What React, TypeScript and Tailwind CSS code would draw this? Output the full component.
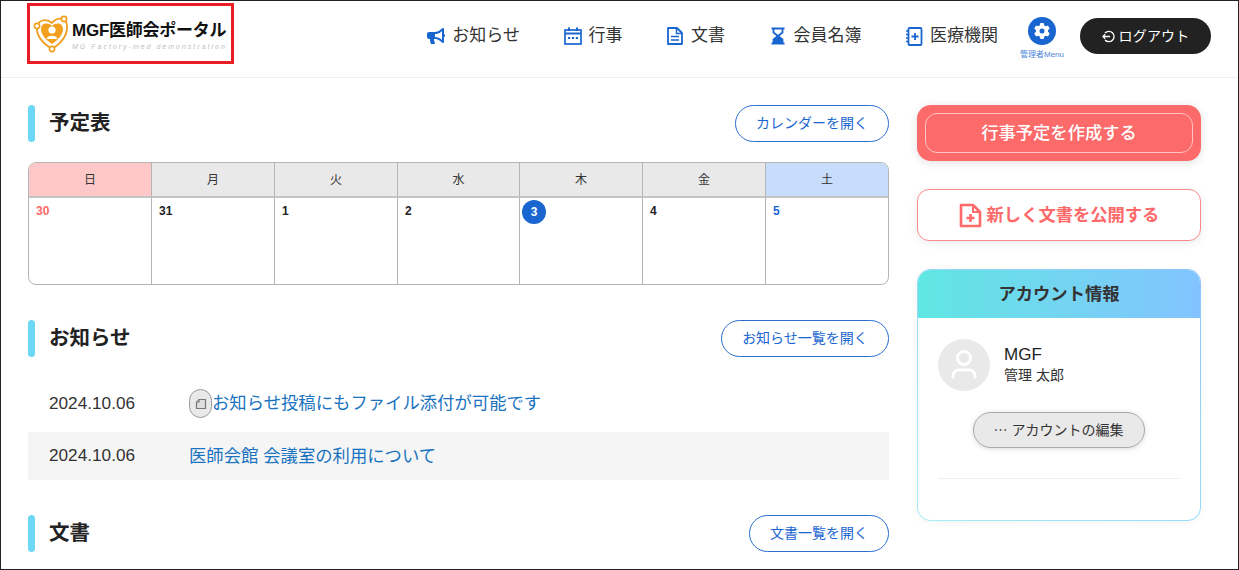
import { FaBullhorn } from 'react-icons/fa';
import { FaGear } from 'react-icons/fa6';

const FONT = "font-['Liberation_Sans','Noto_Sans_CJK_JP',sans-serif]";

const NAV_ITEMS = [
  { label: 'お知らせ', icon: 'megaphone' },
  { label: '行事', icon: 'calendar' },
  { label: '文書', icon: 'file' },
  { label: '会員名簿', icon: 'hourglass' },
  { label: '医療機関', icon: 'book' },
];

const WEEK = ['日', '月', '火', '水', '木', '金', '土'];
const DAYS = ['30', '31', '1', '2', '3', '4', '5'];

function NavIcon({ icon }: { icon: string }) {
  if (icon === 'megaphone') return <FaBullhorn size={18} className="text-[#1a66d0]" />;
  if (icon === 'calendar') {
    return (
      <svg width="18" height="18" viewBox="0 0 18 18" fill="none" stroke="#1a66d0" strokeWidth="1.7">
        <rect x="1" y="3" width="16" height="14" />
        <path d="M1 6.5h16" strokeWidth="2" />
        <path d="M5 0.5v3.5M13 0.5v3.5" strokeWidth="2" />
        <path d="M4 11h2.2M7.9 11h2.2M11.8 11h2.2" strokeWidth="2" />
      </svg>
    );
  }
  if (icon === 'file') {
    return (
      <svg width="18" height="18" viewBox="0 0 18 18" fill="none" stroke="#1a66d0" strokeWidth="1.8">
        <path d="M2 1h9l5 5v11H2Z" strokeLinejoin="round" />
        <path d="M10.5 1v5.5H16" strokeWidth="1.5" />
        <path d="M5 9.5h8M5 13h8" strokeWidth="1.7" />
      </svg>
    );
  }
  if (icon === 'hourglass') {
    return (
      <svg width="18" height="18" viewBox="0 0 18 18" fill="none" stroke="#1a66d0" strokeWidth="1.8">
        <path d="M2.5 1.5h13M2.5 16.5h13" strokeWidth="2.2" />
        <path d="M4.5 2v3.5L9 9l4.5-3.5V2" />
        <path d="M4.5 16v-3.5L9 9l4.5 3.5V16Z" fill="#1a66d0" />
      </svg>
    );
  }
  return (
    <svg width="18" height="19" viewBox="0 0 18 19" fill="none" stroke="#1a66d0" strokeWidth="1.8">
      <rect x="3.5" y="1" width="13" height="17" rx="1" />
      <path d="M10 6v7M6.5 9.5h7" />
      <path d="M1 4h3M1 7.5h3M1 11h3M1 14.5h3" strokeWidth="1.3" />
    </svg>
  );
}

function Logo() {
  return (
    <div className="ml-[26px] mt-[2px] w-[207px] h-[61px] border-[3px] border-[#ea1c24] flex items-center pl-[3px] gap-[1px]">
      <svg width="38" height="40" viewBox="0 0 38 40" fill="none" className="shrink-0">
        <path d="M19 35 C11 30 3 23 4 13 C5 6 13 4 19 9 C24 3 33 3 34 11 C35 22 27 30 19 35 Z" fill="#fff" stroke="#f0a020" strokeWidth="1.8" />
        <path d="M19 30 C13 26 8 21 8 15 C8 9 15 8 19 12 C23 8 30 9 30 15 C30 21 25 26 19 30 Z" fill="#f2a01e" />
        <circle cx="19" cy="16" r="3.6" fill="#fff" />
        <path d="M13.5 25 C14 20.5 24 20.5 24.5 25 Z" fill="#fff" />
        <circle cx="4" cy="12" r="2.6" fill="#fff" stroke="#f0a020" strokeWidth="1.6" />
        <circle cx="31" cy="5" r="2.6" fill="#fff" stroke="#f0a020" strokeWidth="1.6" />
        <circle cx="19" cy="35" r="2.6" fill="#fff" stroke="#f0a020" strokeWidth="1.6" />
      </svg>
      <div className="flex flex-col pt-[5px]">
        <span className="text-[17px] leading-[20px] font-bold text-[#111] whitespace-nowrap tracking-[-0.25px]">MGF医師会ポータル</span>
        <span className="text-[7px] leading-[9px] mt-[1px] italic text-[#c0c0c0] tracking-[2px] whitespace-nowrap">MG Factory-med demonstration</span>
      </div>
    </div>
  );
}

function Header() {
  return (
    <header className="h-[77px] flex items-start justify-between border-b border-[#eeeeee] shrink-0">
      <Logo />
      <div className="flex items-center h-[70px] pr-[27px]">
        <nav className="flex items-center gap-[43.5px] text-[#333] text-[17px]">
          {NAV_ITEMS.map((item) => (
            <a key={item.label} className="flex items-center gap-[7px] whitespace-nowrap">
              <NavIcon icon={item.icon} />
              {item.label}
            </a>
          ))}
        </nav>
        <div className="ml-[14px] w-[60px] flex flex-col items-center pt-[6px]">
          <span className="w-[28px] h-[28px] rounded-full bg-[#1a66d0] flex items-center justify-center">
            <FaGear size={16} className="text-white" />
          </span>
          <span className="text-[8px] leading-[12px] mt-[4px] text-[#4a86d8] whitespace-nowrap">管理者Menu</span>
        </div>
        <button className="ml-[8px] w-[131px] h-[36px] rounded-full bg-[#222] text-white text-[14px] tracking-[0.2px] flex items-center justify-center gap-[4px]">
          <svg width="13" height="13" viewBox="0 0 13 13" fill="none" stroke="#fff" strokeWidth="1.3">
            <path d="M3 3a5.2 5.2 0 1 1 0 7" />
            <path d="M8 6.5H1M3.2 4.3 1 6.5l2.2 2.2" />
          </svg>
          ログアウト
        </button>
      </div>
    </header>
  );
}

function SectionHead({ title, action, width }: { title: string; action: string; width: string }) {
  return (
    <div className="flex items-center justify-between h-[37px]">
      <div className="flex items-center gap-[14px]">
        <span className="w-[7px] h-[37px] rounded-full bg-[#6dd8f5]" />
        <h2 className="text-[20.5px] leading-[28px] pb-[2px] font-bold text-[#222]">{title}</h2>
      </div>
      <a className={`${width} h-[37px] rounded-full border border-[#2a6fd0] text-[#1a66d0] text-[14px] flex items-center justify-center bg-white`}>
        {action}
      </a>
    </div>
  );
}

function Calendar() {
  return (
    <div className="mt-[20px] border border-[#b5b5b5] rounded-[8px] overflow-hidden grid grid-cols-[123px_123px_123px_122px_123px_123px_1fr] text-[12px]">
      {WEEK.map((d, i) => (
        <div
          key={d}
          className={`h-[35px] pt-[1px] flex items-center justify-center text-[#333] border-b-2 border-[#c4c4c4] ${i < 6 ? 'border-r border-r-[#b5b5b5]' : ''} ${i === 0 ? 'bg-[#ffc8c8]' : i === 6 ? 'bg-[#c8dcfb]' : 'bg-[#e9e9e9]'}`}
        >
          {d}
        </div>
      ))}
      {DAYS.map((d, i) => (
        <div key={d} className={`h-[86px] pl-[7px] pt-[4px] ${i < 6 ? 'border-r border-[#b5b5b5]' : ''}`}>
          {d === '3' ? (
            <span className="-ml-[5px] -mt-[2px] w-[24px] h-[24px] rounded-full bg-[#1a66d0] text-white font-bold flex items-center justify-center">3</span>
          ) : (
            <span className={`font-bold ${i === 0 ? 'text-[#fb6a6a]' : i === 6 ? 'text-[#1a66d0]' : 'text-[#222]'}`}>{d}</span>
          )}
        </div>
      ))}
    </div>
  );
}

function NewsRow({ title, attached, shaded }: { title: string; attached?: boolean; shaded?: boolean }) {
  return (
    <div className={`${shaded ? 'h-[48px] bg-[#f5f5f5]' : 'h-[57px]'} flex items-center pl-[21px] text-[17.2px]`}>
      <span className="w-[140px] text-[#333] shrink-0">2024.10.06</span>
      {attached && (
        <span className="w-[23px] h-[29px] rounded-full border border-[#999] bg-[#e9e9e9] flex items-center justify-center shrink-0">
          <svg width="12" height="12" viewBox="0 0 12 12" fill="#dedede" stroke="#777" strokeWidth="1.2">
            <path d="M4 1.5h6.5v9h-9V4Z" />
            <path d="M4 1.5V4H1.5" />
          </svg>
        </span>
      )}
      <a className="text-[17.35px] text-[#1a73c0] whitespace-nowrap">{title}</a>
    </div>
  );
}

function Sidebar() {
  return (
    <aside className="w-[284px] shrink-0">
      <div className="h-[56px] rounded-[14px] bg-[#fd6a6a] p-[8px] shadow-[0_2px_10px_rgba(0,0,0,0.12)]">
        <div className="h-full pt-[2px] rounded-[12px] border border-[#ffc4c4] flex items-center justify-center text-white text-[17.3px] font-medium">
          行事予定を作成する
        </div>
      </div>
      <div className="mt-[28px] h-[52px] pt-[1px] rounded-[12px] border border-[#fd8a8a] bg-white shadow-[0_2px_10px_rgba(0,0,0,0.08)] flex items-center justify-center gap-[5px] text-[#fd6a6a] text-[17.3px] font-bold">
        <svg width="23" height="25" viewBox="0 0 23 25" fill="none" stroke="#fd6a6a" strokeWidth="2.6">
          <path d="M2 2h12l7 7v14H2Z" strokeLinejoin="round" />
          <path d="M14 2v7h7" strokeWidth="2" />
          <path d="M11.5 11v8M7.5 15h8" />
        </svg>
        新しく文書を公開する
      </div>
      <div className="mt-[28px] h-[252px] rounded-[14px] bg-gradient-to-tr from-[#a8edf3] to-[#8cc6ff] p-[1px] shadow-[0_2px_10px_rgba(0,0,0,0.04)]">
        <div className="h-full rounded-[13px] bg-white overflow-hidden">
          <div className="h-[48px] pt-[2px] bg-gradient-to-r from-[#5fe6e2] to-[#82c3ff] flex items-center justify-center text-[17.3px] font-bold text-[#333]">
            アカウント情報
          </div>
          <div className="px-[20px] pt-[21px]">
            <div className="flex items-center gap-[14px]">
              <span className="w-[52px] h-[52px] rounded-full bg-[#e9e9e9] flex items-center justify-center">
                <svg width="26" height="32" viewBox="0 0 26 32" fill="none" stroke="#fff" strokeWidth="3">
                  <circle cx="13" cy="9" r="6.5" />
                  <path d="M2 28v-1a6 6 0 0 1 6-6h10a6 6 0 0 1 6 6v1" strokeLinecap="round" />
                </svg>
              </span>
              <div>
                <div className="text-[17px] leading-[20px] text-[#222]">MGF</div>
                <div className="text-[14px] leading-[20px] text-[#333]">管理 太郎</div>
              </div>
            </div>
            <div className="mt-[21px] pr-[1px] flex justify-center">
              <button className="w-[172px] h-[36px] rounded-full bg-[#e9e9e9] border border-[#aaa] shadow-[0_1px_5px_rgba(0,0,0,0.15)] text-[14px] text-[#333]">
                ⋯ アカウントの編集
              </button>
            </div>
            <div className="mt-[30px] border-t border-[#eeeeee]" />
          </div>
        </div>
      </div>
    </aside>
  );
}

export default function App() {
  return (
    <div className={`${FONT} w-[1239px] h-[570px] overflow-hidden border border-[#222] bg-white flex flex-col`}>
      <Header />
      <main className="flex pl-[27px] pt-[27px] gap-[28px]">
        <div className="w-[861px] shrink-0">
          <SectionHead title="予定表" action="カレンダーを開く" width="w-[154px]" />
          <Calendar />
          <div className="mt-[35px]">
            <SectionHead title="お知らせ" action="お知らせ一覧を開く" width="w-[168px]" />
            <div className="mt-[18px]">
              <NewsRow title="お知らせ投稿にもファイル添付が可能です" attached />
              <NewsRow title="医師会館 会議室の利用について" shaded />
            </div>
          </div>
          <div className="mt-[35px]">
            <SectionHead title="文書" action="文書一覧を開く" width="w-[140px]" />
          </div>
        </div>
        <Sidebar />
      </main>
    </div>
  );
}
